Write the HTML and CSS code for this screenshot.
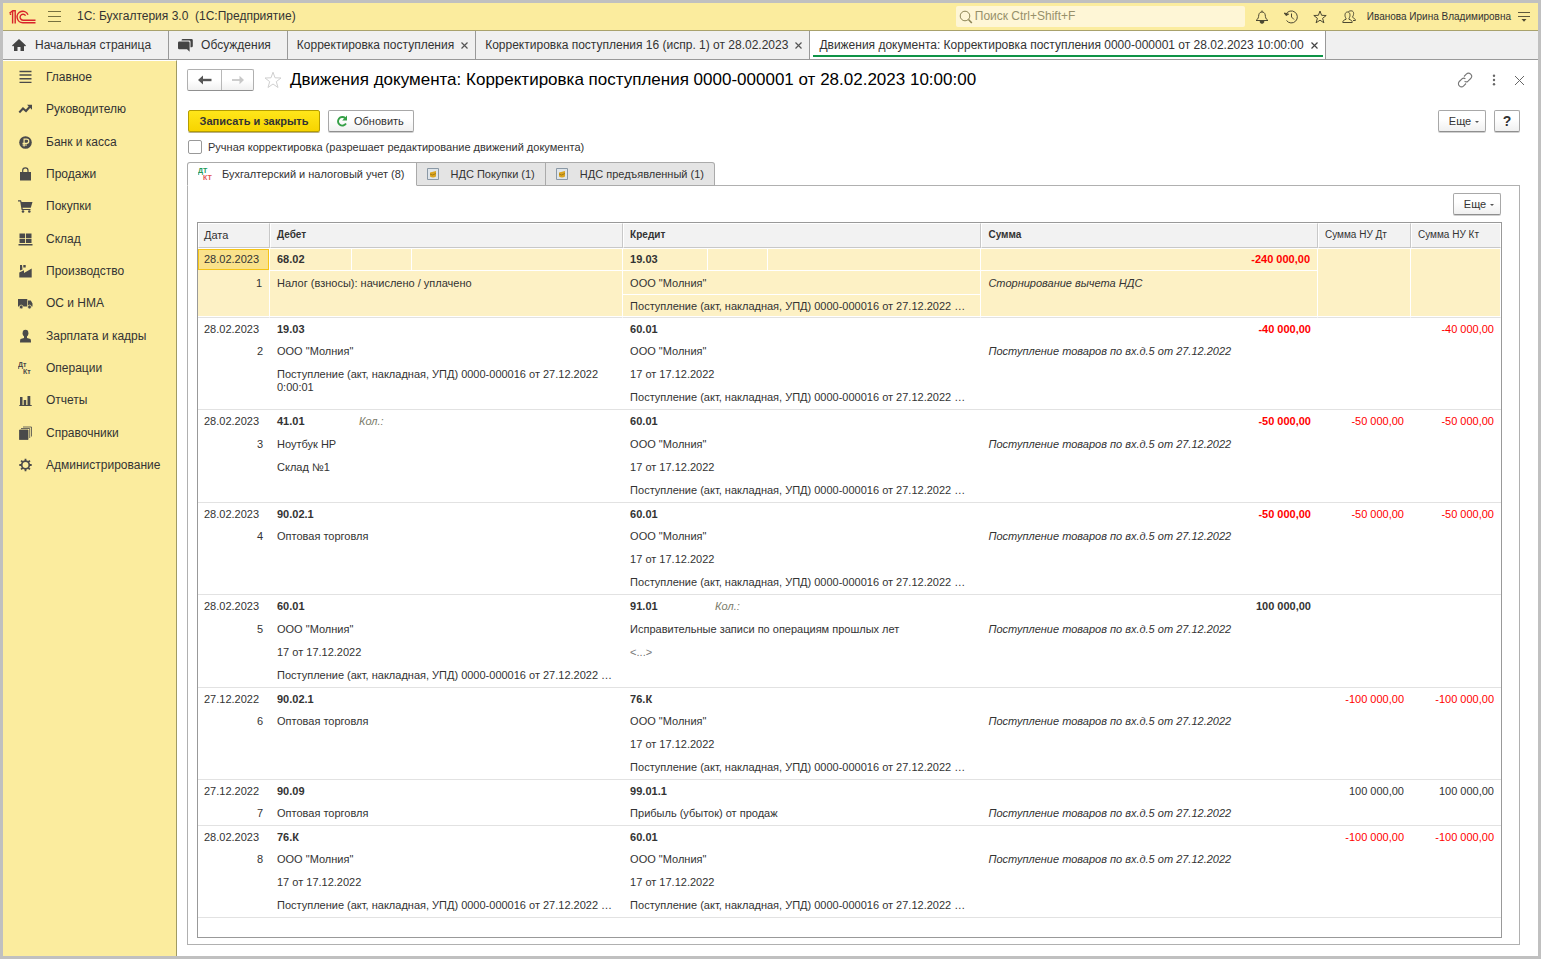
FILE: index.html
```
<!DOCTYPE html>
<html lang="ru">
<head>
<meta charset="utf-8">
<title>1С: Бухгалтерия 3.0 (1С:Предприятие)</title>
<link rel="stylesheet" href="styles.css">
</head>
<body>
<div class="app">
  <header class="topbar">
    <svg class="logo" width="27" height="14" viewBox="0 0 27 14" fill="none" stroke="#d8232a" stroke-width="1.4"><path d="M0.5 3.2 3.6 0.8V13.5M0.8 4.2H2.2M6.2 0V13.5M3.6 0.8H6.2"/><path d="M19 4.7A5.7 5.7 0 1 0 14 12.7H26.5"/><path d="M16.6 5.6A3 3 0 1 0 14 10.2H26.5"/></svg>
    <button class="icon-btn menu-btn" aria-label="Меню"><svg width="13" height="11" viewBox="0 0 13 11" stroke="#77713f" stroke-width="1"><path d="M0 .5H13M0 5.5H13M0 10.5H13"/></svg></button>
    <h1 class="app-name">1С: Бухгалтерия 3.0&nbsp; (1С:Предприятие)</h1>
    <label class="search">
      <svg width="14" height="14" viewBox="0 0 14 14" fill="none" stroke="#8d8556"><circle cx="6" cy="6" r="4.8"/><path d="M9.5 9.5 12.8 13" stroke-width="1.6"/></svg>
      <input type="text" placeholder="Поиск Ctrl+Shift+F" aria-label="Поиск">
    </label>
    <div class="top-icons">
      <button class="icon-btn" aria-label="Уведомления"><svg width="14" height="14" viewBox="0 0 14 14" fill="none" stroke="#4c4832"><path d="M1 10.5C3.5 9 3.5 7 3.8 4.8 4.2 2.8 5.4 2 7 2s2.8.8 3.2 2.800C10.500 7 10.500 9 13 10.500Z"/><path d="M7 .5V2"/><path d="M5 11.500A2 1.800 0 0 0 9 11.500Z" fill="#4c4832"/></svg></button>
      <button class="icon-btn" aria-label="История"><svg width="14" height="14" viewBox="0 0 14 14" fill="none" stroke="#4c4832"><path d="M2 4.200A6 6 0 1 1 2.500 10.500"/><path d="M.3 3 2 5.500 4.600 4.200Z" fill="#4c4832"/><path d="M7.500 3.500V7L10 9.500"/></svg></button>
      <button class="icon-btn" aria-label="Избранное"><svg width="14" height="14" viewBox="0 0 14 14" fill="none" stroke="#4c4832"><path d="M7 1 8.600 5.300 13.200 5.500 9.600 8.300 10.900 12.800 7 10.200 3.100 12.800 4.400 8.300.8 5.500 5.400 5.300Z"/></svg></button>
      <button class="icon-btn" aria-label="Пользователь"><svg width="14" height="14" viewBox="0 0 14 14" fill="none" stroke="#4c4832"><path d="M.8 12.500C.8 10.500 2 10 4 9.300V8.200C2.500 6.500 2.500 2 5.500 2S8.500 6.500 7 8.200V9.300C9 10 10.200 10.500 10.200 12.500Z"/><path d="M6.500 1.500C10-.2 12.200 1.500 11.500 4.500 11.300 6 10.500 6.500 10.500 7.200 12 8.500 13.400 8.500 13.400 10.500H11"/></svg></button>
    </div>
    <span class="user">Иванова Ирина Владимировна</span>
    <button class="icon-btn" aria-label="Настройки окна"><svg width="12" height="12" viewBox="0 0 12 12"><path d="M0 1.500H12M0 5.500H12" stroke="#5d583c"/><path d="M3.500 8H8.500L6 10.800Z" fill="#4c4832"/></svg></button>
  </header>

  <nav class="windows">
    <a class="win home" href="#"><svg width="14" height="12" viewBox="0 0 14 12" fill="#444"><path d="M7 0 14 6.500 13 7.500 12 6.700V12H8.500V8H5.500V12H2V6.700L1 7.500 0 6.500Z"/></svg><span>Начальная страница</span></a>
    <a class="win talks" href="#"><svg width="15" height="13" viewBox="0 0 15 13" fill="#444"><path d="M4.500 0H13.500Q14.800 0 14.800 1.300V7Q14.800 8.300 13.500 8.300H12.500V2.800Q12.500 1.500 11.200 1.500H3.500Q3.500 0 4.500 0Z"/><path d="M1.300 2.500H10.300Q11.600 2.500 11.600 3.800V12.800L9 10.200H1.300Q0 10.200 0 9V3.800Q0 2.500 1.300 2.500Z"/></svg><span>Обсуждения</span></a>
    <div class="win"><a href="#">Корректировка поступления</a><button class="close" aria-label="Закрыть"><svg width="7" height="7" viewBox="0 0 7 7" stroke="#555" stroke-width="1.200"><path d="M.5.5 6.500 6.500M6.500.5.5 6.500"/></svg></button></div>
    <div class="win"><a href="#">Корректировка поступления 16 (испр. 1) от 28.02.2023</a><button class="close" aria-label="Закрыть"><svg width="7" height="7" viewBox="0 0 7 7" stroke="#555" stroke-width="1.200"><path d="M.5.5 6.500 6.500M6.500.5.5 6.500"/></svg></button></div>
    <div class="win current"><a href="#">Движения документа: Корректировка поступления 0000-000001 от 28.02.2023 10:00:00</a><button class="close" aria-label="Закрыть"><svg width="7" height="7" viewBox="0 0 7 7" stroke="#444" stroke-width="1.200"><path d="M.5.5 6.500 6.500M6.500.5.5 6.500"/></svg></button></div>
  </nav>

  <div class="body">
    <nav class="sections">
      <a href="#"><svg width="14" height="14" viewBox="0 0 14 14" stroke="#4a4a4a" stroke-width="1.400"><path d="M1 1.500H13M1 5H13M1 8.700H13M1 12.400H13"/></svg>Главное</a>
      <a href="#"><svg width="14" height="14" viewBox="0 0 14 14" fill="none" stroke="#4a4a4a" stroke-width="2"><path d="M.8 10.500 4.500 6.500 7.500 9 11.500 4.500"/><path d="M8.500 2.800H13.500V7.800Z" fill="#4a4a4a" stroke="none"/></svg>Руководителю</a>
      <a href="#"><svg width="14" height="14" viewBox="0 0 14 14"><circle cx="7" cy="7.500" r="6.300" fill="#4a4a4a"/><path d="M5.600 11.500V4.200H8.200A2 2 0 0 1 8.200 8.300H4M4 10H8.500" fill="none" stroke="#fbec9e" stroke-width="1.200"/></svg>Банк и касса</a>
      <a href="#"><svg width="14" height="14" viewBox="0 0 14 14"><path d="M1.500 5H12.500V13.500H1.500Z" fill="#4a4a4a"/><path d="M4.200 7V3.500A2.500 2.500 0 0 1 9.500 3.500V7" fill="none" stroke="#4a4a4a" stroke-width="1.200"/></svg>Продажи</a>
      <a href="#"><svg width="15" height="14" viewBox="0 0 15 14" fill="#4a4a4a"><path d="M0 1.200H3L3.600 3H14.500L12.800 8.800H4.500L4.800 10H12.500V11H3.600L2.200 2.400H0Z"/><circle cx="5" cy="12.500" r="1.300"/><circle cx="11.300" cy="12.500" r="1.300"/></svg>Покупки</a>
      <a href="#"><svg width="14" height="14" viewBox="0 0 14 14" fill="#4a4a4a"><path d="M1 1.500H6.600V6H1ZM7.500 1.500H13V6H7.500ZM1 6.800H6.600V11H1ZM7.500 6.800H13V11H7.500ZM0 12H14V13.500H0Z"/></svg>Склад</a>
      <a href="#"><svg width="14" height="14" viewBox="0 0 14 14" fill="#4a4a4a"><path d="M.8 8.500 5.500 6.300V9L13.200 4.500V13.500H.8Z"/><path d="M1.500 1H3.500L4 5.500 1.500 6.500ZM4.800 1H7.200V3.500H4.800Z"/></svg>Производство</a>
      <a href="#"><svg width="15" height="14" viewBox="0 0 15 14" fill="#4a4a4a"><path d="M0 3H9.300V10.500H0ZM10 4.500H12.800L14.500 7.500V10.500H10Z"/><circle cx="3.200" cy="11" r="1.900" stroke="#fbec9e" stroke-width=".7"/><circle cx="11.500" cy="11" r="1.900" stroke="#fbec9e" stroke-width=".7"/></svg>ОС и НМА</a>
      <a href="#"><svg width="14" height="14" viewBox="0 0 14 14" fill="#4a4a4a"><ellipse cx="7" cy="4.200" rx="2.900" ry="3.400"/><path d="M5.500 7H8.500V9L12 10Q12.500 10.500 12.500 13.500H1.500Q1.500 10.500 2 10L5.500 9Z"/></svg>Зарплата и кадры</a>
      <a href="#"><svg class="dk" width="15" height="14" viewBox="0 0 15 14"><text x="0" y="6">Дт</text><text x="5" y="13">Кт</text></svg>Операции</a>
      <a href="#"><svg width="14" height="14" viewBox="0 0 14 14" fill="#4a4a4a"><path d="M1.500 4H4V12H1.500ZM5.200 7H7.700V12H5.200ZM9 3H11.800V12H9ZM.8 12H13.200V13H.8Z"/></svg>Отчеты</a>
      <a href="#"><svg width="14" height="14" viewBox="0 0 14 14" fill="none" stroke="#4a4a4a" stroke-width=".8"><path d="M1 4H9.500V13.600H1Z" fill="#4a4a4a"/><path d="M2.500 2.500H11.200V12M4.500 1H13V10.500"/></svg>Справочники</a>
      <a href="#"><svg width="14" height="14" viewBox="0 0 14 14" fill="none" stroke="#4a4a4a"><circle cx="7" cy="7" r="3.800" stroke-width="1.700"/><path d="M7 .8V3M7 11V13.200M.8 7H3M11 7H13.200M2.600 2.600 4.200 4.200M9.800 9.800 11.400 11.400M2.600 11.400 4.200 9.800M9.800 4.200 11.400 2.600" stroke-width="1.800"/></svg>Администрирование</a>
    </nav>

    <main class="form">
      <div class="title-row">
        <div class="history">
          <button aria-label="Назад"><svg width="14" height="10" viewBox="0 0 14 10"><path d="M0 5 5 .5V9.500Z" fill="#555"/><path d="M3 5H13.500" stroke="#555" stroke-width="2.400"/></svg></button>
          <button aria-label="Вперед" disabled><svg width="12" height="10" viewBox="0 0 12 10"><path d="M12 5 7.500.8V9.200Z" fill="#c8c8c8"/><path d="M0 5H9" stroke="#c8c8c8" stroke-width="1.800"/></svg></button>
        </div>
        <button class="icon-btn star" aria-label="В избранное"><svg width="18" height="18" viewBox="0 0 18 18" fill="#fff" stroke="#d0d0d0"><path d="M9 1.200 11 6.800 17 7 12.300 10.600 14 16.500 9 13 4 16.500 5.700 10.600 1 7 7 6.800Z"/></svg></button>
        <h2>Движения документа: Корректировка поступления 0000-000001 от 28.02.2023 10:00:00</h2>
        <div class="form-icons">
          <button class="icon-btn" aria-label="Ссылка"><svg width="16" height="16" viewBox="0 0 16 16" fill="none" stroke="#777" stroke-width="1.100"><path d="M7 4.500 9.300 2.200A3 3 0 0 1 13.700 6.500L11 9.200C10 10 8.500 10 7.600 9.200"/><path d="M9 11.500 6.700 13.800A3 3 0 0 1 2.300 9.500L5 6.800C6 6 7.500 6 8.400 6.800"/></svg></button>
          <button class="icon-btn" aria-label="Действия"><svg width="4" height="12" viewBox="0 0 4 12" fill="#666"><circle cx="2" cy="1.700" r="1.200"/><circle cx="2" cy="6" r="1.200"/><circle cx="2" cy="10.300" r="1.200"/></svg></button>
          <button class="icon-btn" aria-label="Закрыть"><svg width="9" height="9" viewBox="0 0 9 9" stroke="#666"><path d="M0 0 9 9M9 0 0 9"/></svg></button>
        </div>
      </div>

      <div class="commands">
        <button class="btn primary">Записать и закрыть</button>
        <button class="btn refresh"><svg width="12" height="12" viewBox="0 0 12 12"><path d="M9.300 3.200A4.300 4.300 0 1 0 10 8.500" fill="none" stroke="#35a046" stroke-width="1.900"/><path d="M11 .5V5.500H6.200Z" fill="#35a046"/></svg>Обновить</button>
        <button class="btn more">Еще<i class="caret"></i></button>
        <button class="btn help" aria-label="Справка">?</button>
      </div>

      <label class="manual"><input type="checkbox">Ручная корректировка (разрешает редактирование движений документа)</label>

      <div class="tabs">
        <button class="tab active"><svg class="dk color" width="16" height="14" viewBox="0 0 16 14"><text class="dt" x="0" y="6">ДТ</text><text class="kt" x="5" y="13">КТ</text></svg>Бухгалтерский и налоговый учет (8)</button>
        <button class="tab"><svg width="12" height="12" viewBox="0 0 12 12"><path d="M.5.5H11.500V11.500H.5Z" fill="#dfe5ea" stroke="#8a98a5"/><path d="M3 4.500 9 3V8.500Q6 10.500 3 8.500Z" fill="#dba520"/><path d="M3 6 5.500 7 9 5.500" fill="none" stroke="#8a6a14" stroke-width=".7"/></svg>НДС Покупки (1)</button>
        <button class="tab"><svg width="12" height="12" viewBox="0 0 12 12"><path d="M.5.5H11.500V11.500H.5Z" fill="#dfe5ea" stroke="#8a98a5"/><path d="M3 4.500 9 3V8.500Q6 10.500 3 8.500Z" fill="#dba520"/><path d="M3 6 5.500 7 9 5.500" fill="none" stroke="#8a6a14" stroke-width=".7"/></svg>НДС предъявленный (1)</button>
      </div>

      <section class="panel">
        <div class="panel-bar"><button class="btn more">Еще<i class="caret"></i></button></div>
        <div class="grid">
          <table>
            <colgroup><col class="c-date"><col class="c-debit"><col class="c-credit"><col class="c-sum"><col class="c-nudt"><col class="c-nukt"></colgroup>
            <thead>
              <tr><th class="plain">Дата</th><th>Дебет</th><th>Кредит</th><th>Сумма</th><th class="light">Сумма НУ Дт</th><th class="light">Сумма НУ Кт</th></tr>
            </thead>
            <tbody>
              <tr class="selected">
                <td class="date"><p class="cell-focus">28.02.2023</p><p class="num">1</p></td>
                <td><div class="acc"><b>68.02</b><i></i><i></i></div><p>Налог (взносы): начислено / уплачено</p></td>
                <td><div class="acc"><b>19.03</b><i></i><i></i></div><p class="ruled">ООО "Молния"</p><p>Поступление (акт, накладная, УПД) 0000-000016 от 27.12.2022 …</p></td>
                <td><p class="sum neg ruled">-240 000,00</p><p class="note">Сторнирование вычета НДС</p></td>
                <td></td><td></td>
              </tr>
              <tr>
                <td class="date"><p>28.02.2023</p><p class="num">2</p></td>
                <td><div class="acc"><b>19.03</b></div><p>ООО "Молния"</p><p class="wrap">Поступление (акт, накладная, УПД) 0000-000016 от 27.12.2022 0:00:01</p></td>
                <td><div class="acc"><b>60.01</b></div><p>ООО "Молния"</p><p>17 от 17.12.2022</p><p>Поступление (акт, накладная, УПД) 0000-000016 от 27.12.2022 …</p></td>
                <td><p class="sum neg">-40 000,00</p><p class="note">Поступление товаров по вх.д.5 от 27.12.2022</p></td>
                <td></td><td><p class="nu neg">-40 000,00</p></td>
              </tr>
              <tr>
                <td class="date"><p>28.02.2023</p><p class="num">3</p></td>
                <td><div class="acc"><b>41.01</b><i>Кол.:</i></div><p>Ноутбук HP</p><p>Склад №1</p></td>
                <td><div class="acc"><b>60.01</b></div><p>ООО "Молния"</p><p>17 от 17.12.2022</p><p>Поступление (акт, накладная, УПД) 0000-000016 от 27.12.2022 …</p></td>
                <td><p class="sum neg">-50 000,00</p><p class="note">Поступление товаров по вх.д.5 от 27.12.2022</p></td>
                <td><p class="nu neg">-50 000,00</p></td><td><p class="nu neg">-50 000,00</p></td>
              </tr>
              <tr>
                <td class="date"><p>28.02.2023</p><p class="num">4</p></td>
                <td><div class="acc"><b>90.02.1</b></div><p>Оптовая торговля</p></td>
                <td><div class="acc"><b>60.01</b></div><p>ООО "Молния"</p><p>17 от 17.12.2022</p><p>Поступление (акт, накладная, УПД) 0000-000016 от 27.12.2022 …</p></td>
                <td><p class="sum neg">-50 000,00</p><p class="note">Поступление товаров по вх.д.5 от 27.12.2022</p></td>
                <td><p class="nu neg">-50 000,00</p></td><td><p class="nu neg">-50 000,00</p></td>
              </tr>
              <tr>
                <td class="date"><p>28.02.2023</p><p class="num">5</p></td>
                <td><div class="acc"><b>60.01</b></div><p>ООО "Молния"</p><p>17 от 17.12.2022</p><p>Поступление (акт, накладная, УПД) 0000-000016 от 27.12.2022 …</p></td>
                <td><div class="acc"><b>91.01</b><i>Кол.:</i></div><p>Исправительные записи по операциям прошлых лет</p><p class="empty">&lt;...&gt;</p></td>
                <td><p class="sum">100 000,00</p><p class="note">Поступление товаров по вх.д.5 от 27.12.2022</p></td>
                <td></td><td></td>
              </tr>
              <tr>
                <td class="date"><p>27.12.2022</p><p class="num">6</p></td>
                <td><div class="acc"><b>90.02.1</b></div><p>Оптовая торговля</p></td>
                <td><div class="acc"><b>76.К</b></div><p>ООО "Молния"</p><p>17 от 17.12.2022</p><p>Поступление (акт, накладная, УПД) 0000-000016 от 27.12.2022 …</p></td>
                <td><p>&nbsp;</p><p class="note">Поступление товаров по вх.д.5 от 27.12.2022</p></td>
                <td><p class="nu neg">-100 000,00</p></td><td><p class="nu neg">-100 000,00</p></td>
              </tr>
              <tr class="short">
                <td class="date"><p>27.12.2022</p><p class="num">7</p></td>
                <td><div class="acc"><b>90.09</b></div><p>Оптовая торговля</p></td>
                <td><div class="acc"><b>99.01.1</b></div><p>Прибыль (убыток) от продаж</p></td>
                <td><p>&nbsp;</p><p class="note">Поступление товаров по вх.д.5 от 27.12.2022</p></td>
                <td><p class="nu">100 000,00</p></td><td><p class="nu">100 000,00</p></td>
              </tr>
              <tr>
                <td class="date"><p>28.02.2023</p><p class="num">8</p></td>
                <td><div class="acc"><b>76.К</b></div><p>ООО "Молния"</p><p>17 от 17.12.2022</p><p>Поступление (акт, накладная, УПД) 0000-000016 от 27.12.2022 …</p></td>
                <td><div class="acc"><b>60.01</b></div><p>ООО "Молния"</p><p>17 от 17.12.2022</p><p>Поступление (акт, накладная, УПД) 0000-000016 от 27.12.2022 …</p></td>
                <td><p>&nbsp;</p><p class="note">Поступление товаров по вх.д.5 от 27.12.2022</p></td>
                <td><p class="nu neg">-100 000,00</p></td><td><p class="nu neg">-100 000,00</p></td>
              </tr>
            </tbody>
          </table>
        </div>
      </section>
    </main>
  </div>
</div>
</body>
</html>
```
FILE: styles.css
```
* { box-sizing: border-box; }
body { margin: 0; font: 12px "Liberation Sans", Arial, sans-serif; color: #333; background: #fff; }
button, input { font: inherit; color: inherit; margin: 0; }
h1, h2, p { margin: 0; font-weight: normal; }
a { color: inherit; text-decoration: none; }
svg { display: block; flex: none; }

.app { min-height: 100vh; border: 3px solid #c0c0c0; display: flex; flex-direction: column; }
.icon-btn { border: 0; padding: 0; background: none; display: flex; }

/* Top bar */
.topbar { height: 28px; background: #fbec9e; border-bottom: 1px solid #a9a26c; display: flex; align-items: center; padding: 0 8px 0 6px; }
.menu-btn { margin-left: 12px; }
.app-name { font-size: 12px; margin-left: 16px; flex: 1; padding-bottom: 1px; }
.search { width: 289px; height: 21px; border-radius: 2px; background: #fef6d6; display: flex; align-items: center; gap: 2px; padding-left: 3px; margin-right: 10px; }
.search input { flex: 1; min-width: 0; border: 0; padding: 0 0 1px; background: none; outline: 0; }
.search input::placeholder { color: #97906a; opacity: 1; }
.top-icons { display: flex; gap: 15px; }
.user { font-size: 10px; margin: 0 7px 0 11px; white-space: nowrap; }

/* Open windows */
.windows { height: 29px; background: #f0f0f0; border-bottom: 1px solid #999; display: flex; }
.win { display: flex; align-items: center; gap: 7px; padding: 0 7px 0 9px; border-right: 1px solid #999; white-space: nowrap; }
.win.home { gap: 9px; padding-right: 17px; }
.win.talks { gap: 8px; padding-right: 16px; }
.win.current { background: #fff; position: relative; }
.win.current::after { content: ""; position: absolute; left: 3px; right: 2px; bottom: 2px; height: 2px; background: #0e9347; }
.close { border: 0; padding: 0; background: none; }

.body { flex: 1; display: flex; }

/* Sections */
.sections { width: 174px; flex: none; background: #fbec9e; border-right: 1px solid #a09a63; border-top: 1px solid #fff; }
.sections a { height: 32px; display: flex; align-items: center; padding-left: 15px; gap: 13px; white-space: nowrap; }
.sections a:nth-child(3n + 2) { margin-bottom: 1px; }
.sections svg { width: 15px; }
.dk text { font: bold 7px "Liberation Sans", sans-serif; fill: #4a4a4a; }
.dk .dt { fill: #219a57; }
.dk .kt { fill: #e2524f; }

/* Form */
.form { flex: 1; min-width: 0; display: flex; flex-direction: column; padding: 9px 18px 11px 10px; font-size: 11px; }
.title-row { display: flex; align-items: center; height: 22px; }
.history { display: flex; border: 1px solid #b0b0b0; border-bottom-color: #909090; border-radius: 2px; background: linear-gradient(#fff 50%, #f0f0f0); }
.history button { width: 33px; height: 20px; border: 0; padding: 0; background: none; display: flex; align-items: center; justify-content: center; }
.history button + button { width: 32px; border-left: 1px solid #b8b8b8; }
.star { margin: 0 8px 0 10px; }
h2 { font-size: 17px; color: #000; flex: 1; white-space: nowrap; }
.form-icons { display: flex; align-items: center; gap: 19px; margin-right: -4px; }

.btn { height: 22px; border: 1px solid #a8a8a8; border-bottom: 1px solid #8f8f8f; border-radius: 2px; background: linear-gradient(#fff 40%, #f0f0f0); box-shadow: 0 1px 0 #d0d0d0; padding: 0 9px; display: flex; align-items: center; justify-content: center; white-space: nowrap; }
.btn.primary { width: 132px; background: linear-gradient(#ffe61a, #f7d400); border-color: #b59d00; box-shadow: 0 1px 0 #b8b08a; font-weight: bold; }
.btn.refresh { gap: 6px; padding: 0 9px 0 7px; }
.btn.more { width: 48px; gap: 4px; padding: 0 0 0 4px; }
.btn.help { width: 26px; padding: 0; font-size: 14px; font-weight: bold; }
.caret { border: 2px solid transparent; border-top-color: #555; border-bottom: 0; margin-top: 2px; }
.commands { display: flex; gap: 8px; margin-top: 19px; padding-left: 1px; }
.commands .more { margin-left: auto; }
.manual { display: flex; align-items: center; gap: 6px; height: 14px; margin-top: 8px; padding-left: 1px; }
.manual input { appearance: none; width: 14px; height: 14px; border: 1px solid #999; border-radius: 2px; background: #fff; }

.tabs { display: flex; margin-top: 8px; position: relative; height: 24px; margin-bottom: -1px; }
.tab { border: 1px solid #aaa; border-left: 0; background: #e4e4e4; display: flex; align-items: center; gap: 12px; padding: 0 10px; white-space: nowrap; }
.tab.active { border-left: 1px solid #aaa; border-bottom-color: #fff; background: #fff; border-radius: 3px 0 0 0; gap: 8px; padding-right: 11px; }
.tab:last-child { border-radius: 0 3px 0 0; }
.panel { flex: 1; border: 1px solid #b0b0b0; padding: 7px 17px 6px 9px; display: flex; flex-direction: column; }
.panel-bar { display: flex; justify-content: flex-end; padding: 0 1px 7px 0; }

/* Entries */
.grid { flex: 1; border: 1px solid #999; }
table { width: 100%; table-layout: fixed; border-collapse: separate; border-spacing: 0; }
.c-date { width: 72px; }
.c-debit { width: 27.1%; }
.c-credit { width: 27.5%; }
.c-nudt { width: 93px; }
.c-nukt { width: 90px; }
th { height: 25px; background: #f2f2f2; border: 1px solid #fff; border-right-color: #c8c8c8; border-bottom-color: #c8c8c8; padding: 0 0 2px 6px; font-size: 10px; text-align: left; }
th:last-child { border-right-color: #fff; }
th.plain { font-size: 11px; font-weight: normal; padding-left: 5px; }
th.light { font-weight: normal; }
td { padding: 0; vertical-align: top; border-bottom: 1px solid #e2e2e2; }
td p, .acc { line-height: 23px; padding: 0 7px; white-space: nowrap; overflow: hidden; }
td.date p { padding-left: 6px; }
.acc { display: grid; grid-template-columns: 82px 60px 1fr; padding: 0; }
td:nth-child(3) .acc { grid-template-columns: 85px 60px 1fr; }
.acc b { padding-left: 7px; }
.acc i { padding-left: 7px; color: #7c7c6c; }
tr:nth-child(even) td > :first-child, .short td > :first-child { line-height: 22px; }
td .num, .sum, .nu { text-align: right; }
.sum { font-weight: bold; }
.neg { color: #f00; }
.note { font-style: italic; }
.empty { color: #777; }
td .wrap { white-space: normal; line-height: 13px; padding-top: 5px; }

.selected td { background: #fdf1c5; border-right: 1px solid #fff; border-top: 1px solid #fff; box-shadow: inset 0 -1px 0 #fff; }
.selected td > p { line-height: 24px; }
.selected td > p:last-child:nth-child(3) { line-height: 22px; }
.selected td > .cell-focus { line-height: 19px; height: 21px; margin-bottom: 1px; border: 1px solid #f5c416; background: #fae28b; padding: 0 5px; }
.selected .acc, .selected td > .sum { line-height: 21px; border-bottom: 1px solid #fff; height: 22px; }
.selected .acc b, .selected .acc i:nth-child(2) { border-right: 1px solid #fff; }
.selected .ruled { height: 24px; border-bottom: 1px solid #fff; }
```
